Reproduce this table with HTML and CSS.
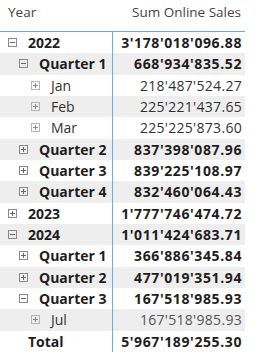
FILE: index.html
```html
<!DOCTYPE html>
<html>
<head>
<meta charset="utf-8">
<link rel="stylesheet" href="styles.css">
</head>
<body>
<div class="matrix">
  <div class="head">
    <div class="hcell left">Year</div>
    <div class="hcell right">Sum Online Sales</div>
  </div>
  <div class="row b"><div class="lab l0"><span class="ic m"></span>2022</div><div class="val">3'178'018'096.88</div></div>
  <div class="row b g"><div class="lab l1"><span class="ic m"></span>Quarter 1</div><div class="val">668'934'835.52</div></div>
  <div class="row n"><div class="lab l2"><span class="ic p lt"></span>Jan</div><div class="val">218'487'524.27</div></div>
  <div class="row n g"><div class="lab l2"><span class="ic p lt"></span>Feb</div><div class="val">225'221'437.65</div></div>
  <div class="row n"><div class="lab l2"><span class="ic p lt"></span>Mar</div><div class="val">225'225'873.60</div></div>
  <div class="row b g"><div class="lab l1"><span class="ic p"></span>Quarter 2</div><div class="val">837'398'087.96</div></div>
  <div class="row b"><div class="lab l1"><span class="ic p"></span>Quarter 3</div><div class="val">839'225'108.97</div></div>
  <div class="row b g"><div class="lab l1"><span class="ic p"></span>Quarter 4</div><div class="val">832'460'064.43</div></div>
  <div class="row b"><div class="lab l0"><span class="ic p"></span>2023</div><div class="val">1'777'746'474.72</div></div>
  <div class="row b g"><div class="lab l0"><span class="ic m"></span>2024</div><div class="val">1'011'424'683.71</div></div>
  <div class="row b"><div class="lab l1"><span class="ic p"></span>Quarter 1</div><div class="val">366'886'345.84</div></div>
  <div class="row b g"><div class="lab l1"><span class="ic p"></span>Quarter 2</div><div class="val">477'019'351.94</div></div>
  <div class="row b"><div class="lab l1"><span class="ic m"></span>Quarter 3</div><div class="val">167'518'985.93</div></div>
  <div class="row n g light"><div class="lab l2"><span class="ic p lt"></span>Jul</div><div class="val">167'518'985.93</div></div>
  <div class="row b"><div class="lab total">Total</div><div class="val">5'967'189'255.30</div></div>
</div>
</body>
</html>
```
FILE: styles.css
```css
html, body {
  margin: 0;
  padding: 0;
  background: #ffffff;
}
body {
  font-family: "Open Sans", "Noto Sans", sans-serif;
  color: #252423;
}
.matrix {
  width: 245px;
}
.head {
  display: flex;
  height: 31px;
  border-bottom: 1px solid #6aacea;
}
.hcell {
  font-size: 13.5px;
  color: #444444;
  line-height: 24px;
}
.hcell.left {
  width: 112px;
  padding-left: 8px;
  box-sizing: border-box;
}
.hcell.right {
  flex: 1;
  text-align: right;
  padding-right: 4px;
}
.row {
  display: flex;
  height: 21.33px;
  line-height: 21px;
  font-size: 14px;
}
.row.g {
  background: #eeeeee;
}
.row.b {
  font-weight: 700;
  color: #1f1e1d;
}
.row.n {
  font-weight: 400;
  color: #333333;
}
.row.light .val {
  color: #555555;
}
.lab {
  width: 112px;
  box-sizing: border-box;
  display: flex;
  align-items: center;
  white-space: nowrap;
}
.lab.l0 { padding-left: 8px; }
.lab.l1 { padding-left: 19px; }
.lab.l2 { padding-left: 31px; }
.lab.total { padding-left: 28px; }
.val {
  flex: 1;
  border-left: 1px solid #6aacea;
  text-align: right;
  padding-right: 3px;
  letter-spacing: 0.3px;
  white-space: nowrap;
}
.row.b .val {
  letter-spacing: 0.6px;
}
.ic {
  position: relative;
  display: inline-block;
  width: 9px;
  height: 9px;
  box-sizing: border-box;
  border: 1px solid #8a8a8a;
  margin-right: 11px;
  flex: none;
}
.ic.lt {
  border-color: #b5b5b5;
}
.ic::before {
  content: "";
  position: absolute;
  left: 1px;
  top: 3px;
  width: 5px;
  height: 1px;
  background: #666666;
}
.ic.p::after {
  content: "";
  position: absolute;
  left: 3px;
  top: 1px;
  width: 1px;
  height: 5px;
  background: #666666;
}
.ic.lt::before, .ic.lt.p::after {
  background: #888888;
}
```
